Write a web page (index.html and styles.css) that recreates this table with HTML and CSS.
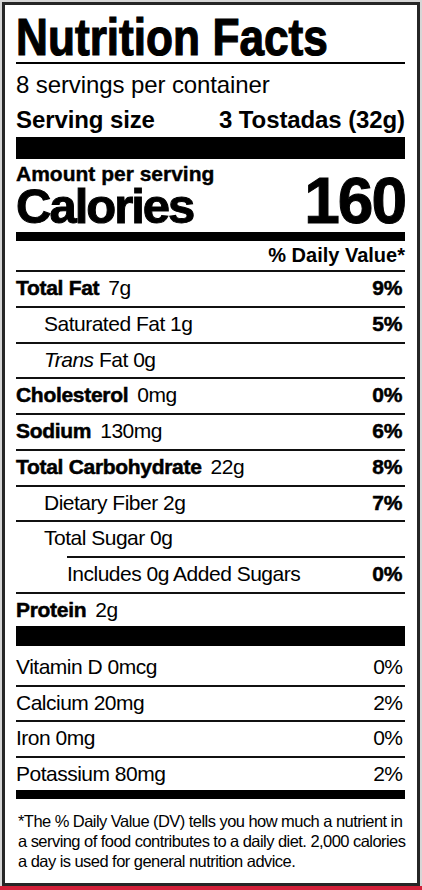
FILE: index.html
```html
<!DOCTYPE html>
<html lang="en">
<head>
<meta charset="utf-8">
<title>Nutrition Facts</title>
<link rel="stylesheet" href="styles.css">
</head>
<body>
<div class="frame">
  <section class="label">
    <h1 class="title"><span class="title-text">Nutrition Facts</span></h1>
    <div class="servings">
      <p class="line">8 servings per container</p>
      <p class="line serving-size"><span>Serving size</span><span>3 Tostadas (32g)</span></p>
    </div>
    <div class="bar bar-xl"></div>
    <div class="calories">
      <div class="cal-left">
        <p class="amount">Amount per serving</p>
        <p class="cal-label">Calories</p>
      </div>
      <p class="cal-value">160</p>
    </div>
    <div class="bar bar-md"></div>
    <p class="dv-head">% Daily Value*</p>
    <ul class="nutrients">
      <li class="row"><span><b class="nm">Total Fat</b>7g</span><b class="pct">9%</b></li>
      <li class="row indent"><span>Saturated Fat 1g</span><b class="pct">5%</b></li>
      <li class="row indent"><span><i>Trans</i> Fat 0g</span></li>
      <li class="row"><span><b class="nm">Cholesterol</b>0mg</span><b class="pct">0%</b></li>
      <li class="row"><span><b class="nm">Sodium</b>130mg</span><b class="pct">6%</b></li>
      <li class="row"><span><b class="nm">Total Carbohydrate</b>22g</span><b class="pct">8%</b></li>
      <li class="row indent"><span>Dietary Fiber 2g</span><b class="pct">7%</b></li>
      <li class="row indent"><span>Total Sugar 0g</span></li>
      <li class="row added"><span>Includes 0g Added Sugars</span><b class="pct">0%</b></li>
      <li class="row protein"><span><b class="nm">Protein</b>2g</span></li>
    </ul>
    <div class="bar bar-lg"></div>
    <ul class="vitamins">
      <li class="row"><span>Vitamin D 0mcg</span><span>0%</span></li>
      <li class="row"><span>Calcium 20mg</span><span>2%</span></li>
      <li class="row"><span>Iron 0mg</span><span>0%</span></li>
      <li class="row"><span>Potassium 80mg</span><span>2%</span></li>
    </ul>
    <div class="bar bar-md"></div>
    <p class="footnote">*The % Daily Value (DV) tells you how much a nutrient in<br>a serving of food contributes to a daily diet. 2,000 calories<br>a day is used for general nutrition advice.</p>
  </section>
</div>
<div class="stripe"></div>
</body>
</html>
```

FILE: styles.css
```css
* {
  box-sizing: border-box;
  margin: 0;
  padding: 0;
}

html,
body {
  background: #d6d6d6;
}

body {
  font-family: "Liberation Sans", Arial, sans-serif;
  color: #000;
}

.frame {
  padding: 2px 2px 0;
}

.label {
  background: #fff;
  border: 3px solid #262626;
  padding: 0 12px 0 11px;
}

.title {
  padding-top: 7px;
  font-size: 52px;
  line-height: 50px;
  font-weight: 700;
  border-bottom: 2px solid #000;
  white-space: nowrap;
}

.title-text {
  display: inline-block;
  transform: scaleX(0.85);
  transform-origin: 0 50%;
  -webkit-text-stroke: 1.2px #000;
}

.servings {
  padding-top: 3px;
}

.line {
  font-size: 24px;
  line-height: 35px;
  letter-spacing: -0.1px;
}

.serving-size {
  display: flex;
  justify-content: space-between;
  font-weight: 700;
}

.bar {
  background: #000;
}

.bar-xl {
  height: 22px;
}

.bar-lg {
  height: 20px;
}

.bar-md {
  height: 9px;
}

.calories {
  display: flex;
  justify-content: space-between;
  align-items: flex-end;
  padding-top: 4px;
  font-weight: 700;
}

.amount {
  font-size: 21px;
  line-height: 22px;
  margin-bottom: -5px;
  -webkit-text-stroke: 0.4px #000;
}

.cal-label {
  font-size: 49px;
  line-height: 52px;
  letter-spacing: -2px;
  -webkit-text-stroke: 1px #000;
}

.cal-value {
  font-size: 64px;
  line-height: 62px;
  letter-spacing: -2px;
  -webkit-text-stroke: 1px #000;
}

.dv-head {
  text-align: right;
  font-size: 20px;
  line-height: 29px;
  font-weight: 700;
}

.nutrients,
.vitamins {
  list-style: none;
}

.row {
  display: flex;
  justify-content: space-between;
  border-top: 2px solid #111;
  font-size: 21px;
  line-height: 32px;
  padding: 0 2.5px 1.75px 0;
  letter-spacing: -0.5px;
  white-space: nowrap;
}

.row b {
  font-weight: 700;
  letter-spacing: -0.3px;
  -webkit-text-stroke: 0.5px #000;
}

.row .nm {
  margin-right: 9px;
}

.row .pct {
  letter-spacing: 0;
}

.indent {
  padding-left: 28px;
}

.added {
  margin-left: 51px;
}

.protein {
  padding-bottom: 0;
}

.vitamins .row:first-child {
  border-top: 0;
  padding-top: 5px;
}

.vitamins .row:last-child {
  padding-bottom: 0;
}

.footnote {
  font-size: 16.5px;
  line-height: 20px;
  letter-spacing: -0.55px;
  padding: 12.3px 0 11.7px 2px;
  white-space: nowrap;
}

.stripe {
  height: 4px;
  background: #d3213a;
}
```
